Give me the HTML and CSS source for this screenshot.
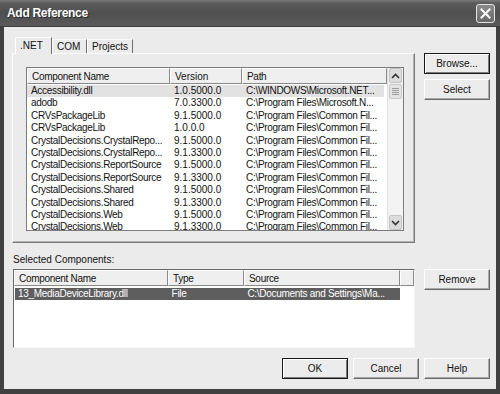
FILE: index.html
```html
<!DOCTYPE html>
<html lang="en">
<head>
    <meta charset="UTF-8">
    <title>Add Reference</title>
    <link rel="stylesheet" href="styles.css">
</head>
<body>
    <div class="window">
        <div class="titlebar">
            <span class="title">Add Reference</span>
            <span class="close">
                <svg width="11" height="11" viewBox="0 0 11 11"><path d="M1.5 1.5 L9.5 9.5 M9.5 1.5 L1.5 9.5" stroke="#fff" stroke-width="2" stroke-linecap="square"/></svg>
            </span>
        </div>

        <div class="content">
            <div class="top">
                <div class="tabbox">
                    <div class="tabs">
                        <div class="tab active tab-net">.NET</div>
                        <div class="tab tab-com">COM</div>
                        <div class="tab tab-proj">Projects</div>
                    </div>
                    <div class="panel">
                        <div class="list refs">
                            <div class="list-main">
                                <div class="row head">
                                    <span class="c-name">Component Name</span>
                                    <span class="c-ver">Version</span>
                                    <span class="c-path">Path</span>
                                </div>
                                <div class="row hot"><span class="c-name">Accessibility.dll</span><span class="c-ver">1.0.5000.0</span><span class="c-path">C:\WINDOWS\Microsoft.NET...</span></div>
                                <div class="row"><span class="c-name">adodb</span><span class="c-ver">7.0.3300.0</span><span class="c-path">C:\Program Files\Microsoft.N...</span></div>
                                <div class="row"><span class="c-name">CRVsPackageLib</span><span class="c-ver">9.1.5000.0</span><span class="c-path">C:\Program Files\Common Fil...</span></div>
                                <div class="row"><span class="c-name">CRVsPackageLib</span><span class="c-ver">1.0.0.0</span><span class="c-path">C:\Program Files\Common Fil...</span></div>
                                <div class="row"><span class="c-name">CrystalDecisions.CrystalRepo...</span><span class="c-ver">9.1.5000.0</span><span class="c-path">C:\Program Files\Common Fil...</span></div>
                                <div class="row"><span class="c-name">CrystalDecisions.CrystalRepo...</span><span class="c-ver">9.1.3300.0</span><span class="c-path">C:\Program Files\Common Fil...</span></div>
                                <div class="row"><span class="c-name">CrystalDecisions.ReportSource</span><span class="c-ver">9.1.5000.0</span><span class="c-path">C:\Program Files\Common Fil...</span></div>
                                <div class="row"><span class="c-name">CrystalDecisions.ReportSource</span><span class="c-ver">9.1.3300.0</span><span class="c-path">C:\Program Files\Common Fil...</span></div>
                                <div class="row"><span class="c-name">CrystalDecisions.Shared</span><span class="c-ver">9.1.5000.0</span><span class="c-path">C:\Program Files\Common Fil...</span></div>
                                <div class="row"><span class="c-name">CrystalDecisions.Shared</span><span class="c-ver">9.1.3300.0</span><span class="c-path">C:\Program Files\Common Fil...</span></div>
                                <div class="row"><span class="c-name">CrystalDecisions.Web</span><span class="c-ver">9.1.5000.0</span><span class="c-path">C:\Program Files\Common Fil...</span></div>
                                <div class="row"><span class="c-name">CrystalDecisions.Web</span><span class="c-ver">9.1.3300.0</span><span class="c-path">C:\Program Files\Common Fil...</span></div>
                            </div>
                            <div class="vscroll">
                                <div class="arrow">
                                    <svg width="9" height="6" viewBox="0 0 9 6"><path d="M1 5 L4.5 1.5 L8 5" fill="none" stroke="#333" stroke-width="1.6"/></svg>
                                </div>
                                <div class="thumb"><i></i><i></i><i></i><i></i></div>
                                <div class="track"></div>
                                <div class="arrow">
                                    <svg width="9" height="6" viewBox="0 0 9 6"><path d="M1 1 L4.5 4.5 L8 1" fill="none" stroke="#333" stroke-width="1.6"/></svg>
                                </div>
                            </div>
                        </div>
                    </div>
                </div>
                <div class="side">
                    <button class="btn default">Browse...</button>
                    <button class="btn">Select</button>
                </div>
            </div>

            <div class="label">Selected Components:</div>

            <div class="middle">
                <div class="list selected">
                    <div class="list-main">
                        <div class="row head">
                            <span class="s-name">Component Name</span>
                            <span class="s-type">Type</span>
                            <span class="s-src">Source</span>
                            <span class="s-rest"></span>
                        </div>
                        <div class="row sel"><span class="s-name">13_MediaDeviceLibrary.dll</span><span class="s-type">File</span><span class="s-src">C:\Documents and Settings\Ma...</span></div>
                    </div>
                </div>
                <div class="side">
                    <button class="btn">Remove</button>
                </div>
            </div>

            <div class="footer">
                <button class="btn default">OK</button>
                <button class="btn">Cancel</button>
                <button class="btn">Help</button>
            </div>
        </div>
    </div>
</body>
</html>
```

FILE: styles.css
```css
body {
    margin: 0;
    background-color: #3a3a3a;
    font-family: "Liberation Sans", Arial, sans-serif;
    font-size: 10px;
    color: #111;
}
.window {
    width: 500px;
    height: 394px;
    box-sizing: border-box;
    border: 4px solid #404040;
    border-top: none;
    border-bottom-width: 5px;
    background-color: #ebebeb;
}
.titlebar {
    height: 27px;
    margin: 0 -4px;
    padding: 0 5px 0 7px;
    display: flex;
    align-items: center;
    justify-content: space-between;
    background: linear-gradient(#7a7a7a 0, #5c5c5c 3px, #4f4f4f 50%, #5a5a5a 100%);
    border-bottom: 1px solid #3c3c3c;
    box-sizing: border-box;
}
.title {
    color: #fff;
    font-weight: bold;
    font-size: 12px;
    letter-spacing: -0.3px;
    text-shadow: 1px 1px 0 #2a2a2a;
}
.close {
    width: 17px;
    height: 17px;
    margin-top: 1px;
    border: 1px solid #e4e4e4;
    border-radius: 3px;
    background: linear-gradient(#8a8a8a, #6a6a6a);
    display: flex;
    align-items: center;
    justify-content: center;
}
.content {
    padding: 10px 6px 0 8px;
}
.top, .middle {
    display: flex;
    gap: 9px;
}
.tabbox {
    width: 403px;
}
.tabs {
    display: flex;
    align-items: flex-end;
    height: 16px;
    padding-left: 3px;
}
.tab {
    height: 14px;
    line-height: 14px;
    border-left: 1px solid #fff;
    border-right: 1px solid #6e6e6e;
    border-top: 1px solid #fafafa;
    box-sizing: border-box;
}
.tab-net { width: 37px; padding-left: 4px; }
.tab-com { width: 35px; padding-left: 4px; }
.tab-proj { width: 46px; padding-left: 4px; }
.tab.active {
    height: 17px;
    line-height: 15px;
    background-color: #ebebeb;
    margin-bottom: -1px;
    position: relative;
}
.panel {
    height: 190px;
    box-sizing: border-box;
    border: 1px solid;
    border-color: #fdfdfd #7a7a7a #7a7a7a #fdfdfd;
    box-shadow: inset -1px -1px 0 #b4b4b4;
    padding: 13px 11px 0 13px;
}
.list {
    display: flex;
    background-color: #fff;
    border: 1px solid #7c7c7c;
    overflow: hidden;
    box-sizing: border-box;
}
.list.refs {
    width: 378px;
    height: 164px;
}
.list-main {
    flex: 1;
    overflow: hidden;
}
.row {
    display: flex;
    height: 12.4px;
    line-height: 12.4px;
    white-space: nowrap;
    letter-spacing: -0.3px;
}
.row span {
    padding-left: 4px;
    box-sizing: border-box;
    overflow: hidden;
}
.row.head {
    height: 16px;
    line-height: 15px;
    margin-bottom: 1px;
}
.row.head span {
    background-color: #efefef;
    border-top: 1px solid #fff;
    border-left: 1px solid #fff;
    border-right: 1px solid #8a8a8a;
    border-bottom: 1px solid #8a8a8a;
    padding-left: 4px;
}
.row.hot {
    background-color: #e2e2e2;
    margin-right: 3px;
}
.c-name { width: 143px; }
.c-ver { width: 72px; letter-spacing: 0; }
.c-path { flex: 1; }
.vscroll {
    width: 15px;
    display: flex;
    flex-direction: column;
    background-color: #f3f3f3;
    border-left: 1px solid #e0e0e0;
}
.arrow {
    height: 15px;
    margin: 0 1px;
    background-color: #dcdcdc;
    border: 1px solid #c4c4c4;
    border-radius: 2px;
    display: flex;
    align-items: center;
    justify-content: center;
    box-sizing: border-box;
}
.thumb {
    height: 15px;
    margin: 1px 1px 0;
    background-color: #e4e4e4;
    border: 1px solid #c8c8c8;
    border-radius: 2px;
    box-sizing: border-box;
    display: flex;
    flex-direction: column;
    align-items: center;
    justify-content: center;
    gap: 1px;
}
.thumb i {
    width: 7px;
    height: 1px;
    background-color: #9a9a9a;
}
.track {
    flex: 1;
}
.side {
    width: 66px;
    display: flex;
    flex-direction: column;
    gap: 5px;
    padding-top: 16px;
}
.middle .side {
    padding-top: 0;
}
.btn {
    height: 21px;
    width: 66px;
    padding: 0;
    font-family: "Liberation Sans", Arial, sans-serif;
    font-size: 10px;
    color: #111;
    background-color: #ececec;
    border: 1px solid;
    border-color: #fff #6a6a6a #6a6a6a #fff;
    box-shadow: inset -1px -1px 0 #a8a8a8;
}
.btn.default {
    border-color: #1a1a1a;
    box-shadow: inset 1px 1px 0 #fff, inset -1px -1px 0 #7a7a7a;
}
.label {
    padding: 10px 0 3px 1px;
    line-height: 13px;
}
.list.selected {
    width: 404px;
    height: 79px;
    margin-left: 1px;
    border-color: #6a6a6a #f6f6f6 #f6f6f6 #6a6a6a;
}
.s-name { width: 154px; }
.s-type { width: 76px; }
.s-src { width: 156px; }
.s-rest { flex: 1; }
.row.sel {
    height: 12px;
    line-height: 12px;
    margin: 2px 0 0 1px;
    width: 385px;
    background-color: #5e5e5e;
    color: #fff;
}
.row.sel span { padding-left: 3px; }
.footer {
    display: flex;
    justify-content: flex-end;
    gap: 5px;
    margin-top: 10px;
}
```
